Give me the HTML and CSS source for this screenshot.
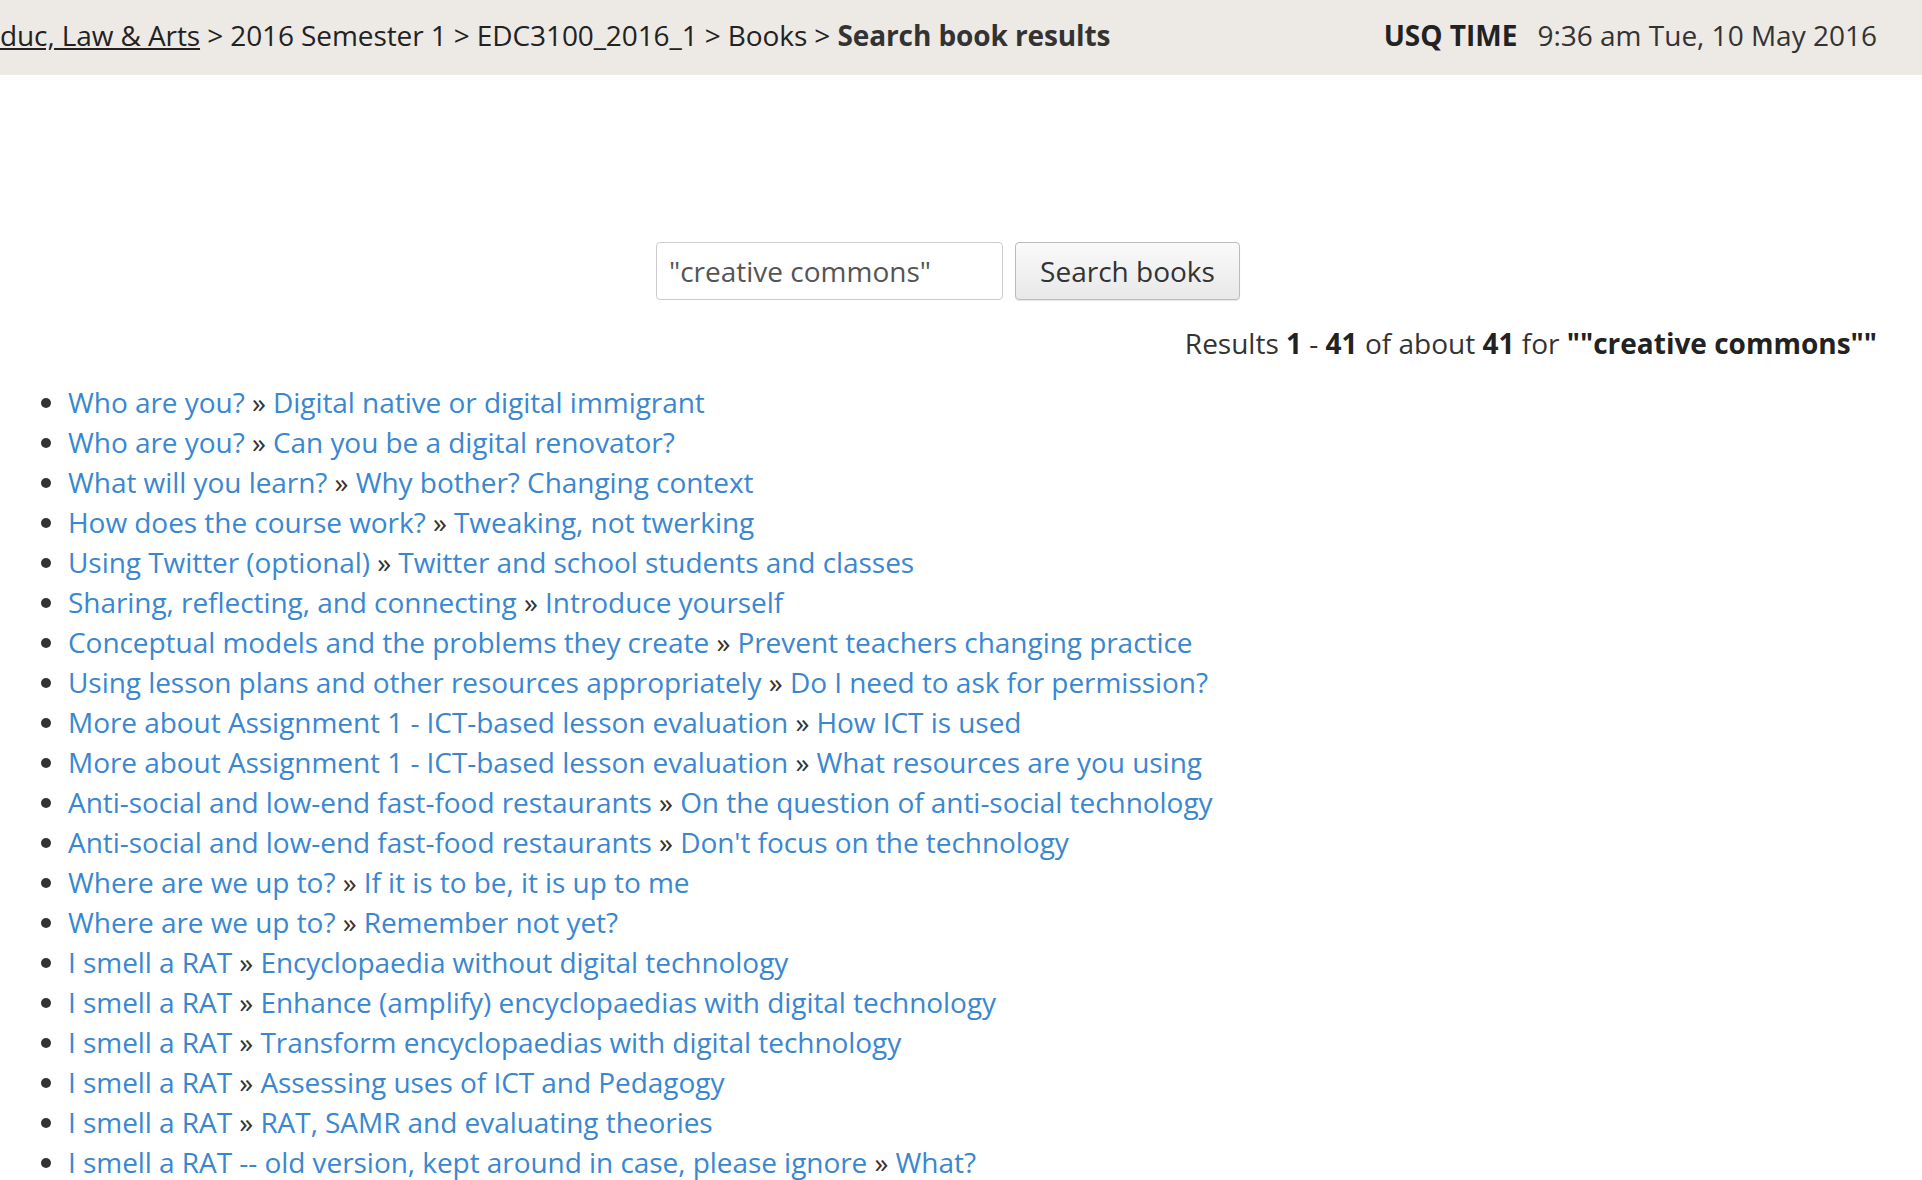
FILE: index.html
```html
<!DOCTYPE html>
<html>
<head>
<meta charset="utf-8">
<link rel="stylesheet" href="styles.css">
</head>
<body>
<header class="navbar">
  <div class="crumbs"><a href="#" class="crumb-link">duc, Law &amp; Arts</a> &gt; 2016 Semester 1 &gt; EDC3100_2016_1 &gt; Books &gt; <b>Search book results</b></div>
  <div class="clock"><b>USQ TIME</b><span class="time">9:36 am Tue, 10 May 2016</span></div>
</header>
<main class="content">
  <form class="search">
    <input class="search-input" type="text" value="&quot;creative commons&quot;">
    <button class="search-btn" type="button">Search books</button>
  </form>
  <div class="results-info">Results <b>1</b> - <b>41</b> of about <b>41</b> for <b>""creative commons""</b></div>
  <ul class="results">
    <li><a href="#">Who are you?</a> » <a href="#">Digital native or digital immigrant</a></li>
    <li><a href="#">Who are you?</a> » <a href="#">Can you be a digital renovator?</a></li>
    <li><a href="#">What will you learn?</a> » <a href="#">Why bother? Changing context</a></li>
    <li><a href="#">How does the course work?</a> » <a href="#">Tweaking, not twerking</a></li>
    <li><a href="#">Using Twitter (optional)</a> » <a href="#">Twitter and school students and classes</a></li>
    <li><a href="#">Sharing, reflecting, and connecting</a> » <a href="#">Introduce yourself</a></li>
    <li><a href="#">Conceptual models and the problems they create</a> » <a href="#">Prevent teachers changing practice</a></li>
    <li><a href="#">Using lesson plans and other resources appropriately</a> » <a href="#">Do I need to ask for permission?</a></li>
    <li><a href="#">More about Assignment 1 - ICT-based lesson evaluation</a> » <a href="#">How ICT is used</a></li>
    <li><a href="#">More about Assignment 1 - ICT-based lesson evaluation</a> » <a href="#">What resources are you using</a></li>
    <li><a href="#">Anti-social and low-end fast-food restaurants</a> » <a href="#">On the question of anti-social technology</a></li>
    <li><a href="#">Anti-social and low-end fast-food restaurants</a> » <a href="#">Don't focus on the technology</a></li>
    <li><a href="#">Where are we up to?</a> » <a href="#">If it is to be, it is up to me</a></li>
    <li><a href="#">Where are we up to?</a> » <a href="#">Remember not yet?</a></li>
    <li><a href="#">I smell a RAT</a> » <a href="#">Encyclopaedia without digital technology</a></li>
    <li><a href="#">I smell a RAT</a> » <a href="#">Enhance (amplify) encyclopaedias with digital technology</a></li>
    <li><a href="#">I smell a RAT</a> » <a href="#">Transform encyclopaedias with digital technology</a></li>
    <li><a href="#">I smell a RAT</a> » <a href="#">Assessing uses of ICT and Pedagogy</a></li>
    <li><a href="#">I smell a RAT</a> » <a href="#">RAT, SAMR and evaluating theories</a></li>
    <li><a href="#">I smell a RAT -- old version, kept around in case, please ignore</a> » <a href="#">What?</a></li>
  </ul>
</main>
</body>
</html>
```
FILE: styles.css
```css
html, body {
  margin: 0;
  padding: 0;
  background: #fff;
  font-family: "Open Sans", "Liberation Sans", sans-serif;
  font-size: 28px;
  color: #333;
  overflow: hidden;
}
.navbar {
  height: 75px;
  box-sizing: border-box;
  background: #ede9e5;
  display: flex;
  align-items: center;
  justify-content: space-between;
  padding: 0 45px 5px 0;
  color: #222;
}
.crumbs {
  white-space: nowrap;
  letter-spacing: -0.1px;
}
.crumb-link {
  color: #222;
  text-decoration: underline;
}
.crumbs b {
  color: #333;
}
.clock b {
  color: #222;
  margin-right: 20px;
}
.time {
  color: #333;
}
.content {
  padding: 0 45px 0 0;
}
.search {
  display: flex;
  justify-content: center;
  gap: 12px;
  padding: 167px 0 0 0;
  margin-left: 19px;
}
.search-input {
  width: 347px;
  height: 58px;
  box-sizing: border-box;
  border: 1px solid #ccc;
  border-radius: 4px;
  padding: 0 12px;
  font-family: inherit;
  font-size: 28px;
  color: #555;
}
.search-btn {
  width: 225px;
  height: 58px;
  box-sizing: border-box;
  border: 1px solid #bbb;
  border-radius: 4px;
  background: linear-gradient(#fafafa, #e8e8e8);
  box-shadow: 0 1px 1px rgba(0,0,0,0.1);
  font-family: inherit;
  font-size: 28px;
  color: #333;
}
.results-info {
  text-align: right;
  line-height: 40px;
  margin-top: 23px;
}
.results-info b {
  color: #222;
}
.results {
  margin: 19px 0 0 0;
  padding-left: 68px;
  line-height: 40px;
  letter-spacing: -0.05px;
}
.results a {
  color: #3a87cf;
  text-decoration: none;
}
```
